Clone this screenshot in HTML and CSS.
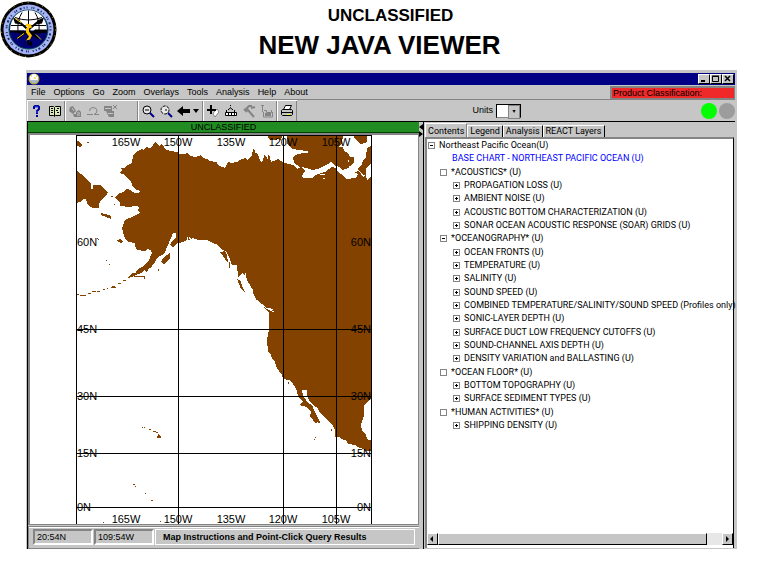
FILE: index.html
```html
<!DOCTYPE html>
<html lang="en">
<head>
<meta charset="utf-8">
<title>New Java Viewer</title>
<link rel="stylesheet" href="styles.css">
</head>
<body>
<header class="slide-head">
  <svg class="seal" viewBox="0 0 57 57" role="img" aria-label="Seal">
    <circle cx="28.500" cy="29" r="28" fill="#000"/>
    <circle cx="28.500" cy="29" r="27" fill="none" stroke="#e0a800" stroke-dasharray="1 5 1 8"/>
    <circle cx="28.500" cy="29" r="25" fill="#a5b5f7"/>
    <circle cx="28.500" cy="29" r="22" fill="none" stroke="#20285a" stroke-width="2" stroke-dasharray="1 3 2 2 1 2 1 4 1 1"/>
    <circle cx="28.500" cy="29" r="19.500" fill="#000073" stroke="#004a4a"/>
    <path d="M10 30C10 3 47 3 47 30Z" fill="#fff"/>
    <path d="M28.500 10V31M22 12Q17 20 18 31M35 12Q40 20 39 31M15 17Q28 22 42 17M11 25H46" fill="none" stroke="#000"/>
    <path d="M10 30H24L26 32H32L35 29H47V32L38 33L31 34H24L16 32H10ZM13 17l7 3 1 4-6-1zM44 17l-7 3-1 4 6-1z"/>
    <path d="M20 22L38 38M37 22L18 38M28 36V43L31 44V41" stroke="#000" stroke-width="2" fill="none"/>
    <path d="M17 38l7-5M15 18l6 4M41 39l-5-5" stroke="#ffc600" stroke-width="1" fill="none"/>
    <path d="M27 23l4 1 1 3-3 1v3l3 4-2 4-4 1 3-4-3-4v-4l2-2-3-1z" fill="#ffc600"/>
  </svg>
  <div class="titles">
    <p class="marking">UNCLASSIFIED</p>
    <h1>NEW JAVA VIEWER</h1>
  </div>
</header>

<main class="window">
  <div class="titlebar">
    <svg class="app-icon" viewBox="0 0 12 12" aria-hidden="true"><circle cx="6" cy="6" r="5.500" fill="#b5a84a"/><circle cx="6" cy="5" r="4" fill="#fff"/><path d="M2 7h8l-2 3H4z" fill="#a8b8c8"/><path d="M3 3h1M8 3h1M6 5h2" stroke="#e8c800"/></svg>
    <div class="win-buttons">
      <button aria-label="Minimize"><svg viewBox="0 0 10 8"><path d="M2 6h4" stroke="#000" stroke-width="2"/></svg></button>
      <button aria-label="Maximize"><svg viewBox="0 0 10 8"><path d="M1.500 1.500h6v5h-6zM1 1h7" fill="none" stroke="#000"/></svg></button>
      <button aria-label="Close"><svg viewBox="0 0 10 8"><path d="M2 1l5 5M7 1L2 6" stroke="#000" stroke-width="1.500"/></svg></button>
    </div>
  </div>

  <div class="menu-row">
    <nav class="menus">
      <button>File</button><button>Options</button><button>Go</button><button>Zoom</button><button>Overlays</button><button>Tools</button><button>Analysis</button><button>Help</button><button>About</button>
    </nav>
    <div class="product">Product Classification:</div>
  </div>

  <div class="tool-row">
    <div class="tools">
      <div class="group">
        <button aria-label="Help"><svg viewBox="0 0 14 14"><path d="M4 5V3l1-1h3l1 1v2L7 7v3M7 11v2" fill="none" stroke="#00009c" stroke-width="2"/><path d="M5 3h3M7 7v2" stroke="#2850ff"/></svg></button>
        <button aria-label="Catalog"><svg viewBox="0 0 14 14"><path d="M1.500 2.500h4l1 1 1-1h5v9h-5l-1 1-1-1h-4z" fill="#d8e8b8" stroke="#000"/><path d="M6.500 4v8M3 4.500h2M3 6.500h2M3 8.500h2M9 4.500h2M8 6.500h2M9 8.500h2" stroke="#000"/></svg></button>
      </div>
      <div class="group dim">
        <button aria-label="Layers"><svg viewBox="0 0 14 14"><path d="M2 3l3-1 3 5-3 3-4-3zM8 8l3-2 2 2v5H8zM5 10h4v3H6z" fill="#848484"/><path d="M4 4l2 3M9 9h3M9 11h3" stroke="#c6c6c6"/></svg></button>
        <button aria-label="Undo"><svg viewBox="0 0 14 14"><path d="M3.500 7Q3.500 3.500 7 3.500t4 3q0 3-3 4h5M1 10.500h6" fill="none" stroke="#848484"/></svg></button>
        <button aria-label="Remove"><svg viewBox="0 0 14 14"><path d="M0 2h8v5H0zM2 7h8v6H5z" fill="#848484"/><path d="M9 1l4 4M13 1L9 5" stroke="#848484"/><path d="M1 4.500h6M4 9.500h5" stroke="#c6c6c6"/></svg></button>
      </div>
      <div class="group">
        <button aria-label="Zoom out"><svg viewBox="0 0 14 14"><circle cx="6" cy="6" r="4" fill="#e8e8e8" stroke="#000"/><path d="M4 6h4" stroke="#000"/><path d="M9 9l4 4" stroke="#000084" stroke-width="2"/></svg></button>
        <button aria-label="Zoom window"><svg viewBox="0 0 14 14"><circle cx="6" cy="6" r="4" fill="#e8e8e8" stroke="#000" stroke-dasharray="3 1"/><path d="M6 6h2" stroke="#000"/><path d="M9 9l4 4" stroke="#000084" stroke-width="2"/></svg></button>
        <button aria-label="Back"><svg viewBox="0 0 14 14"><path d="M0 7l6-5v3h7v4H6v3z"/></svg></button>
        <button class="caret" aria-label="Back history"><svg viewBox="0 0 8 14"><path d="M1 5h6L4 9z"/></svg></button>
      </div>
      <div class="group">
        <button aria-label="Add point"><svg viewBox="0 0 14 14"><path d="M8 8l3-3 2 3-4 5-2-3z" fill="#fff" stroke="#848484"/><path d="M5 1v9M1 6h9" stroke="#000" stroke-width="2"/></svg></button>
        <button aria-label="Measure"><svg viewBox="0 0 14 14"><path d="M1.500 8.500h11v3h-11z" fill="#fff" stroke="#000"/><path d="M2.500 8V6M10.500 8V6M4 5.500h1l1.500-2 1.500 2h1M6.500 1v1M4.500 9v2M7.500 9v2M10.500 9v2" fill="none" stroke="#000"/></svg></button>
        <button aria-label="Build"><svg viewBox="0 0 14 14"><path d="M3 6l4-4h3M5 5l7 8M2 5l3 3M9 4l4-1" fill="none" stroke="#848484" stroke-width="2"/></svg></button>
        <button aria-label="Save chart"><svg viewBox="0 0 14 14"><path d="M2.500 1v7M1 1.500h3M4 6.500h2.500v2h5V6M5 11.500h6M3.500 8v5h9V8" fill="none" stroke="#848484"/><path d="M5 9h6v2H5z" fill="#848484"/></svg></button>
      </div>
      <div class="group">
        <button aria-label="Print"><svg viewBox="0 0 14 14"><path d="M5.500 1.500h6l-2 4h-6z" fill="#fff" stroke="#000"/><path d="M1.500 6.500l1-1h9l1 1v4l-1 1h-9l-1-1z" fill="#c6c6c6" stroke="#000"/><path d="M2 8.500h10" stroke="#000"/><path d="M7 10.500h3" stroke="#ffff00"/></svg></button>
      </div>
    </div>
    <div class="units">
      <label for="units">Units</label>
      <span class="drop"><select id="units"><option></option></select></span>
    </div>
    <svg class="lamps" viewBox="0 0 34 18" role="img" aria-label="Status"><circle cx="8" cy="9" r="8" fill="#00ff00"/><circle cx="26" cy="9" r="8" fill="#9c9c9c"/></svg>
  </div>

  <div class="panes">
    <section class="map-pane">
      <div class="map-mark">UNCLASSIFIED</div>
      <div class="map-view">
        <svg class="map" viewBox="76 135 296 389" role="img" aria-label="Map of the northeast Pacific Ocean">
          <g class="land">
            <path d="M155 142L158 144L160 147L161 144L164 146L165 149L170 151L178 152L179 154L185 154L187 153L190 156L195 157L201 155L203 158L207 159L209 161L217 162L218 165L222 167L225 168L228 162L231 163L237 162L240 160L245 158L247 160L252 156L253 149L255 150L255 153L258 154L259 158L261 162L263 161L264 155L266 156L268 160L268 155L270 157L271 162L276 160L278 159L281 161L285 163L293 165L297 169L301 167L305 171L302 176L303 178L312 178L315 175L325 172L332 167L336 168L338 172L343 175L346 179L356 178L358 174L354 172L359 171L363 177L366 175L367 181L371 176V399L364 405L364 415L361 425L362 431L365 433L368 440L371 440V451L367 451L361 448L357 447L355 445L348 444L347 441L342 439L339 437L335 437L335 430L332 424L327 420L322 414L320 413L317 407L315 407L310 402L307 396L307 391L306 390L302 390L303 395L307 402L312 405L315 412L317 416L320 422L319 424L317 422L316 424L311 417L310 417L311 412L307 407L302 406L300 405L303 401L298 397L297 391L295 387L292 382L289 380L283 379L282 375L277 368L275 362L273 360L270 353L268 352L267 340L269 330V313L262 305L257 300L254 298L253 290L247 280L246 276L242 273L238 277L237 265L232 265L230 259L227 253L225 251L220 252L228 263L227 255L225 251L222 250L218 245L213 243L207 240L198 240L193 238L190 240L187 240L183 242L178 243L173 247L170 245L172 241L176 237L176 233L173 233L171 238L168 245L167 247L165 253L157 258L154 264L150 267L147 272L144 270L142 273L138 274L132 277L127 278L132 273L136 273L137 270L142 267L148 262L152 253L151 250L147 249L145 251L137 250L135 246L135 243L129 242L125 239L122 228L125 220L132 217L140 213L138 211L139 208L137 206L133 206L130 207L120 206L120 203L115 197L120 193L123 192L127 189L130 190L135 193L140 193L137 191L133 187L131 182L127 178L125 175L119 173L122 170L120 168L125 168L126 166L132 163L133 155L138 151L142 149L144 150L146 147L150 148L153 145Z"/>
            <path d="M287 135V144L292 149L300 150L311 152L298 154L293 157L294 163L300 167L307 168L312 170L318 169L328 164L331 162L336 166L340 167L342 170L349 168L350 164L347 161L351 158L348 153L344 151L343 147L338 147L342 143L343 135Z"/>
            <path d="M267 135L270 140H277L279 137L280 141L283 135ZM353 135H367V142L361 144L356 140ZM371 146V164L366 168V176L363 175L360 171L357 169L361 166L363 161L366 157L367 148ZM348 158L354 157V163L350 166ZM76 170L81 174L85 177L91 184V189H93V185L101 185L103 188L108 192L107 195L102 199L99 204V208L93 208L88 205L86 199L83 199L80 202L76 203ZM76 140L80 142L82 145L81 147L76 146ZM101 213L105 214L111 216V219L106 217L101 215ZM116 240L121 239L123 242L121 243ZM170 253V258L167 261L164 264L161 262L163 258ZM237 279L241 281L242 286L245 292L241 289L239 284ZM158 434L161 436V438H157Z"/>
          </g>
          <path class="isles" d="M76 294h3M80 295h6M88 293h3M92 291h4M97 291h3M103 289h2M107 288h1M112 286h3M111 287h5M118 283h3M123 280h3M134 276h10v3M149 268l3-2M158 271v-2M87 142h2M111 196h2M114 204h1M97 238l2 2M106 260h1M109 264h1M230 252h2M229 262v6M142 427h1M144 427h1M149 429h2M153 431h3M156 432h2M133 484h2M135 486h1M145 493h1M151 500h2M103 522h1M160 521h1M315 438v-1M314 439h1M288 382v2M331 429v2M273 308v2"/>
          <path class="inlets" d="M230 262l3 5-2 5M236 270l-3 4M242 280l3-5v7M245 276l2 4M253 294l4 8M260 303l6 5 8 4M268 308l5 2M137 190l3 2M186 243l2-6M191 240l-2-3M320 174l5 1M323 178h2M358 148l4 5M347 143l3 3"/>
          <path class="grid" d="M76.500 135V524M178.500 135V524M283.500 135V524M336.500 135V524M371.500 135V524M76 135.500H372M76 329.500H372M76 396.500H372M76 453.500H372M76 507.500H372"/>
          <g class="labels mid">
            <text x="126" y="146">165W</text><text x="178" y="146">150W</text><text x="231" y="146">135W</text><text x="283" y="146">120W</text><text x="336" y="146">105W</text>
            <text x="126" y="523">165W</text><text x="178" y="523">150W</text><text x="231" y="523">135W</text><text x="283" y="523">120W</text><text x="336" y="523">105W</text>
          </g>
          <g class="labels"><text x="77" y="246">60N</text><text x="77" y="333">45N</text><text x="77" y="400">30N</text><text x="77" y="457">15N</text><text x="77" y="511">0N</text></g>
          <g class="labels end"><text x="371" y="246">60N</text><text x="371" y="333">45N</text><text x="371" y="400">30N</text><text x="371" y="457">15N</text><text x="371" y="511">0N</text></g>
        </svg>
      </div>
      <div class="status">
        <output class="coord">20:54N</output>
        <output class="coord">109:54W</output>
        <div class="message">Map Instructions and Point-Click Query Results</div>
      </div>
    </section>

    <div class="splitter"><svg viewBox="0 0 4 14" aria-hidden="true"><path d="M4 1v6L0 4zM0 8l4 3-4 3z"/></svg></div>

    <section class="side-pane">
      <div class="tabs" role="tablist">
        <button role="tab" aria-selected="true">Contents</button><button role="tab">Legend</button><button role="tab">Analysis</button><button role="tab">REACT Layers</button>
      </div>
      <div class="contents">
        <ul class="tree">
          <li><button class="toggle open" aria-label="Collapse"></button>Northeast Pacific Ocean(U)</li>
          <li class="base"><a href="#">BASE CHART - NORTHEAST PACIFIC OCEAN (U)</a></li>
          <li class="l1"><button class="toggle" aria-label="Collapse"></button>*ACOUSTICS* (U)</li>
          <li class="l2"><button class="toggle plus" aria-label="Expand"></button>PROPAGATION LOSS (U)</li>
          <li class="l2"><button class="toggle plus" aria-label="Expand"></button>AMBIENT NOISE (U)</li>
          <li class="l2"><button class="toggle plus" aria-label="Expand"></button>ACOUSTIC BOTTOM CHARACTERIZATION (U)</li>
          <li class="l2"><button class="toggle plus" aria-label="Expand"></button>SONAR OCEAN ACOUSTIC RESPONSE (SOAR) GRIDS (U)</li>
          <li class="l1"><button class="toggle open" aria-label="Collapse"></button>*OCEANOGRAPHY* (U)</li>
          <li class="l2"><button class="toggle plus" aria-label="Expand"></button>OCEAN FRONTS (U)</li>
          <li class="l2"><button class="toggle plus" aria-label="Expand"></button>TEMPERATURE (U)</li>
          <li class="l2"><button class="toggle plus" aria-label="Expand"></button>SALINITY (U)</li>
          <li class="l2"><button class="toggle plus" aria-label="Expand"></button>SOUND SPEED (U)</li>
          <li class="l2"><button class="toggle plus" aria-label="Expand"></button>COMBINED TEMPERATURE/SALINITY/SOUND SPEED (Profiles only)</li>
          <li class="l2"><button class="toggle plus" aria-label="Expand"></button>SONIC-LAYER DEPTH (U)</li>
          <li class="l2"><button class="toggle plus" aria-label="Expand"></button>SURFACE DUCT LOW FREQUENCY CUTOFFS (U)</li>
          <li class="l2"><button class="toggle plus" aria-label="Expand"></button>SOUND-CHANNEL AXIS DEPTH (U)</li>
          <li class="l2"><button class="toggle plus" aria-label="Expand"></button>DENSITY VARIATION and BALLASTING (U)</li>
          <li class="l1"><button class="toggle" aria-label="Collapse"></button>*OCEAN FLOOR* (U)</li>
          <li class="l2"><button class="toggle plus" aria-label="Expand"></button>BOTTOM TOPOGRAPHY (U)</li>
          <li class="l2"><button class="toggle plus" aria-label="Expand"></button>SURFACE SEDIMENT TYPES (U)</li>
          <li class="l1"><button class="toggle" aria-label="Collapse"></button>*HUMAN ACTIVITIES* (U)</li>
          <li class="l2"><button class="toggle plus" aria-label="Expand"></button>SHIPPING DENSITY (U)</li>
        </ul>
        <div class="scrollbar">
          <button aria-label="Scroll left"><svg viewBox="0 0 8 8"><path d="M5 1v6L2 4z"/></svg></button>
          <div class="thumb"></div>
          <button aria-label="Scroll right"><svg viewBox="0 0 8 8"><path d="M3 1v6l3-3z"/></svg></button>
        </div>
      </div>
    </section>
  </div>
</main>
</body>
</html>
```

FILE: styles.css
```css
* { box-sizing: border-box; }

body {
  margin: 0;
  background: #fff;
  color: #000;
  font: 9px/13px "Liberation Sans", Arial, sans-serif;
}

button {
  margin: 0;
  padding: 0;
  border: 0;
  background: none;
  color: inherit;
  font: inherit;
}

svg { display: block; }

/* Page heading */
.slide-head { display: flex; height: 70px; }
.seal { width: 57px; height: 58px; flex: none; }
.titles { flex: 1; padding: 6px 66px 0 0; text-align: center; }
.marking { margin: 0; padding-left: 22px; font-size: 17px; line-height: 20px; font-weight: bold; }
h1 { margin: 3px 0 0; font-size: 26px; line-height: 32px; }

/* Application window */
.window {
  margin: 0 31px 0 26px;
  padding: 3px 2px 0 1px;
  background: #c6c6c6;
}

.titlebar {
  display: flex;
  align-items: center;
  justify-content: space-between;
  height: 12px;
  padding: 0 1px;
  background: #000084;
}
.app-icon { width: 12px; height: 12px; }
.win-buttons { display: flex; }
.win-buttons button {
  width: 12px;
  height: 10px;
  background: #c6c6c6;
  border: 1px solid;
  border-color: #fff #000 #000 #fff;
}
.win-buttons svg { width: 10px; height: 8px; }

.menu-row {
  display: flex;
  justify-content: space-between;
  height: 15px;
  padding-top: 1px;
}
.menus {
  display: flex;
  flex: 1;
  gap: 8px;
  padding-left: 4px;
  border-bottom: 1px solid #848484;
}
.product {
  width: 125px;
  padding-left: 1px;
  line-height: 10px;
  background: #ef2929;
  border: 2px solid #848484;
  border-width: 2px 1px 2px 2px;
}

.tool-row { display: flex; align-items: center; height: 21px; }
.tools { display: flex; flex: none; align-self: stretch; border-top: 1px solid #fff; }
.group {
  display: flex;
  align-items: center;
  gap: 4px;
  padding: 0 2px;
  border-left: 1px solid #fff;
  border-right: 1px solid #848484;
}
.group svg { width: 14px; height: 14px; }
.group .caret svg { width: 8px; }
.group .caret { margin-left: -3px; }
.group.dim { padding-right: 19px; }
.units { display: flex; align-items: center; gap: 3px; margin-left: auto; margin-right: 180px; }
.drop { position: relative; display: block; width: 25px; height: 14px; }
.drop select {
  display: block;
  width: 100%;
  height: 100%;
  appearance: none;
  background: #fff;
  border: 1px solid #000;
  border-radius: 0;
  border-bottom-color: #848484;
}
.drop::after {
  content: "▾";
  position: absolute;
  top: 1px;
  right: 1px;
  width: 10px;
  height: 12px;
  background: #c6c6c6;
  border: 1px solid #848484;
  font: 6px/9px "DejaVu Sans", sans-serif;
  text-align: center;
  pointer-events: none;
}
.lamps { width: 34px; height: 18px; flex: none; }

/* Panes */
.panes { display: flex; border-top: 1px solid #000; }
.map-pane { flex: 39 1 0; min-width: 0; border-left: 1px solid #000; display: flex; flex-direction: column; }
.side-pane {
  flex: 31 1 0;
  min-width: 0;
  border-left: 1px solid #000;
  display: flex;
  flex-direction: column;
  font-family: Roboto, "Liberation Sans", sans-serif;
}

.map-mark {
  height: 11px;
  line-height: 11px;
  text-align: center;
  background: #218c21;
  border-bottom: 1px solid #004200;
}
.map-view {
  display: flex;
  justify-content: center;
  background: #fff;
  border: 2px solid #848484;
  border-width: 2px 1px 1px 2px;
}
.map { height: 389px; max-width: 100%; overflow: visible; }
.land { fill: #844200; shape-rendering: crispEdges; }
.isles { fill: none; stroke: #844200; shape-rendering: crispEdges; }
.inlets { fill: none; stroke: #fff; shape-rendering: crispEdges; }
.grid { fill: none; stroke: #000; shape-rendering: crispEdges; }
.labels { font-size: 11px; }
.mid { text-anchor: middle; }
.end { text-anchor: end; }

.status {
  display: flex;
  gap: 1px;
  height: 23px;
  margin-top: 1px;
  padding: 2px 4px 3px;
  border: 1px solid #848484;
  border-width: 1px 0 1px 1px;
  box-shadow: inset 0 1px #fff;
}
.coord {
  width: 60px;
  padding-left: 2px;
  line-height: 13px;
  border: 2px solid;
  border-color: #848484 #fff #fff #848484;
}
.message {
  flex: 1;
  padding-left: 7px;
  font-weight: bold;
  line-height: 15px;
  border: 1px solid #fff;
}

.splitter { width: 4px; padding-top: 1px; flex: none; }
.splitter svg { width: 4px; height: 14px; }

.tabs { display: flex; align-items: flex-end; height: 15px; padding-left: 1px; }
.tabs button {
  height: 12px;
  padding: 0 2px;
  line-height: 11px;
  border-top: 1px solid #fff;
  border-left: 1px solid #fff;
  border-right: 1px solid #000;
  white-space: nowrap;
}
.tabs [aria-selected="true"] { height: 14px; line-height: 12px; border-right-color: #848484; }

.contents {
  display: flex;
  flex-direction: column;
  flex: 1;
  margin: 0 1px 1px 1px;
  background: #fff;
  border: 2px solid #848484;
  border-width: 2px 1px 0 2px;
  border-right-color: #000;
}
.tree {
  display: flex;
  flex-direction: column;
  justify-content: space-between;
  height: 293px;
  margin: 0 0 auto;
  padding: 0;
  list-style: none;
}
.tree li { display: flex; align-items: center; gap: 4px; height: 13px; padding-left: 1px; white-space: nowrap; }
.tree .l1 { padding-left: 13px; }
.tree .l2 { padding-left: 26px; }
.tree .base { padding-left: 25px; }
.tree a { color: #0000ff; text-decoration: none; }
.toggle { flex: none; width: 7px; height: 7px; border: 1px solid #848484; }
.toggle.open { background: linear-gradient(#000, #000) center / 3px 1px no-repeat; }
.toggle.plus {
  background:
    linear-gradient(#000, #000) center / 3px 1px no-repeat,
    linear-gradient(#000, #000) center / 1px 3px no-repeat;
}

.scrollbar { display: flex; height: 12px; margin-bottom: 3px; background: #e7e7e7; }
.scrollbar button, .thumb {
  background: #c6c6c6;
  border: 1px solid;
  border-color: #fff #000 #000 #fff;
}
.scrollbar button { width: 11px; }
.scrollbar svg { width: 8px; height: 8px; }
.thumb { flex: 1; margin-right: 15px; }
```
